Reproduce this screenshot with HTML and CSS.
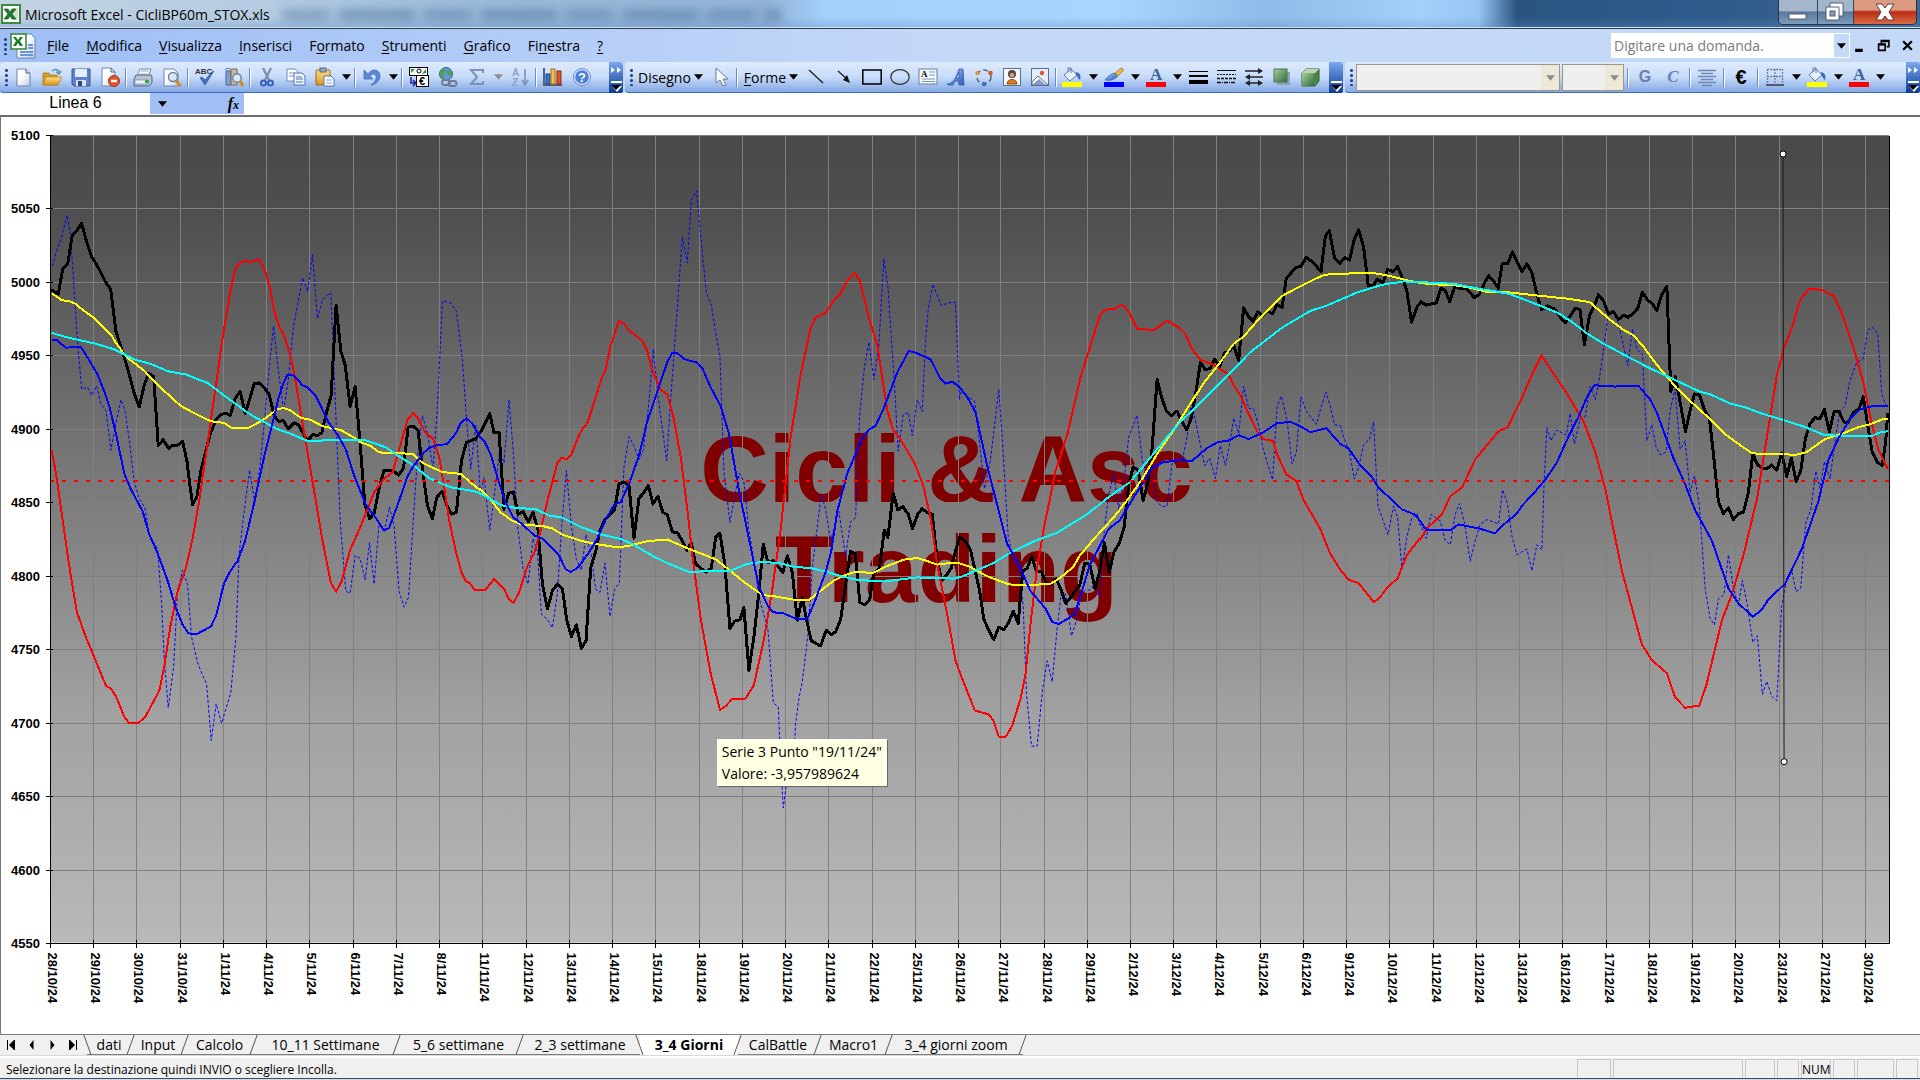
FILE: index.html
```
<!DOCTYPE html>
<html lang="it">
<head>
<meta charset="utf-8">
<title>Microsoft Excel - CicliBP60m_STOX.xls</title>
<link rel="stylesheet" href="styles.css">
</head>
<body>
<svg class="defs" width="0" height="0" aria-hidden="true">
  <defs>
    <linearGradient id="gBlue" x1="0" y1="0" x2="1" y2="1"><stop offset="0" stop-color="#a9c8f5"/><stop offset="1" stop-color="#2a5bb8"/></linearGradient>
    <linearGradient id="gGreen" x1="0" y1="0" x2="1" y2="1"><stop offset="0" stop-color="#a8cf9c"/><stop offset="1" stop-color="#2f6b36"/></linearGradient>
    <linearGradient id="gPage" x1="0" y1="0" x2="1" y2="1"><stop offset=".4" stop-color="#fff"/><stop offset="1" stop-color="#bccde8"/></linearGradient>
    <linearGradient id="gGold" x1="0" y1="0" x2="0" y2="1"><stop offset="0" stop-color="#ffe08a"/><stop offset="1" stop-color="#d8951c"/></linearGradient>
  </defs>
  <symbol id="i-excel" viewBox="0 0 20 20"><rect x="1" y="1" width="18" height="18" fill="#fff" stroke="#3b8a3b" stroke-width="2"/><rect x="12" y="4" width="5" height="12" fill="#cfe3cf"/><path d="M3 5h4l2 3 2-3h4l-4 5 4 5h-4l-2-3-2 3H3l4-5z" fill="#1f7a2c" stroke="#0f4d18" stroke-width=".6"/></symbol>
  <symbol id="i-book" viewBox="0 0 26 26"><path d="M7 1h14l4 4v20H7z" fill="url(#gPage)" stroke="#6b86ad"/><path d="M18 12h5M18 15h5M10 19h13M10 22h13" stroke="#6c94d4" stroke-width="2"/><rect x="1" y="1" width="15" height="15" fill="#fff" stroke="#3b8a3b" stroke-width="1.6"/><path d="M3 4h3l2 3 2-3h3l-3 4 3 5h-3l-2-3-2 3H3l3-5z" fill="#1f7a2c"/></symbol>
  <symbol id="i-new" viewBox="0 0 20 20"><path d="M4 2h9l4 4v13H4z" fill="url(#gPage)" stroke="#6d85ab"/><path d="M13 2v4h4" fill="#d7e2f3" stroke="#46597a"/></symbol>
  <symbol id="i-open" viewBox="0 0 20 20"><path d="M1 6h6l1 2h7v10H1z" fill="#d99c2b" stroke="#a87416" stroke-width=".7"/><path d="M4 10h16l-4 8H1z" fill="url(#gGold)" stroke="#b57e1c" stroke-width=".7"/><path d="M10 4c3-3 7-1 7 2m-3-1 3 2 2-3" fill="none" stroke="#5f8cba" stroke-width="1.5"/></symbol>
  <symbol id="i-save" viewBox="0 0 20 20"><path d="M1 2h18v17H3l-2-2z" fill="#5c82cb" stroke="#39549a"/><rect x="4" y="2" width="12" height="8" fill="#e3ecfa"/><rect x="5" y="13" width="10" height="6" fill="#dbe2ee"/><rect x="7" y="14" width="4" height="5" fill="#31498a"/></symbol>
  <symbol id="i-perm" viewBox="0 0 20 20"><path d="M2 1h9l4 4v14H2z" fill="url(#gPage)" stroke="#6d85ab"/><path d="M11 1v4h4" fill="none" stroke="#46597a"/><circle cx="14" cy="14" r="5.5" fill="#e2562c" stroke="#a83212"/><path d="M11 14h6" stroke="#fff" stroke-width="2.4"/></symbol>
  <symbol id="i-print" viewBox="0 0 20 20"><path d="M7 2h11l-3 8H4z" fill="#fff" stroke="#7184a4"/><path d="M8 4h7M7 7h7" stroke="#91a5c6"/><path d="M3 8h15l1 2v6l-3 3H1v-7z" fill="#b7c2d4" stroke="#556480"/><path d="M2 13h13v4H2z" fill="#eef2f8" stroke="#7d8aa4" stroke-width=".7"/><rect x="12" y="13" width="4" height="3" fill="#26b13f"/></symbol>
  <symbol id="i-preview" viewBox="0 0 20 20"><path d="M2 2h10l4 4v13H2z" fill="url(#gPage)" stroke="#6d85ab"/><circle cx="11" cy="10" r="4.5" fill="#d3e6f8" fill-opacity=".9" stroke="#6f83a0" stroke-width="1.5"/><path d="m14 14 5 5" stroke="#d58a1d" stroke-width="3"/></symbol>
  <symbol id="i-spell" viewBox="0 0 20 20"><path d="m5 11 5 7L19 4l-2 1-7 8-3-3z" fill="#3f6fc4" stroke="#2a4f9a" stroke-width=".6"/></symbol>
  <symbol id="i-research" viewBox="0 0 20 20"><path d="M2 4h5v14H2z" fill="#7e9fd6" stroke="#46639f"/><path d="M7 2h6v16H7z" fill="#c9b8a0" stroke="#7c6a50"/><path d="M1 3c2-2 3-2 5-1" stroke="#2f5fb5" fill="none"/><circle cx="13" cy="11" r="4.2" fill="#dbeaf9" stroke="#6f83a0" stroke-width="1.4"/><path d="m16 14 3 5" stroke="#d58a1d" stroke-width="3"/></symbol>
  <symbol id="i-cut" viewBox="0 0 20 20"><path d="m6 1 6 12M14 1 8 13" stroke="#7d8da8" stroke-width="2.2"/><circle cx="6.500" cy="16" r="2.500" fill="none" stroke="#3561b7" stroke-width="2"/><circle cx="13.500" cy="16" r="2.500" fill="none" stroke="#3561b7" stroke-width="2"/></symbol>
  <symbol id="i-copy" viewBox="0 0 20 20"><path d="M1 2h8l3 3v9H1z" fill="#fff" stroke="#6c8cc4"/><path d="M3 6h6M3 9h6" stroke="#6c8cc4"/><path d="M8 6h8l3 3v9H8z" fill="#eef4fd" stroke="#5377b8"/><path d="M10 10h6M10 12h7M10 15h7" stroke="#5377b8"/></symbol>
  <symbol id="i-paste" viewBox="0 0 20 20"><rect x="1" y="3" width="14" height="15" rx="1" fill="url(#gGold)" stroke="#9a6a14"/><rect x="5" y="1" width="6" height="4" fill="#9aa7bd" stroke="#56637c"/><path d="M9 9h7l3 3v7H9z" fill="#fff" stroke="#5377b8"/><path d="M11 13h6M11 16h6" stroke="#7d9bd0"/></symbol>
  <symbol id="i-undo" viewBox="0 0 20 20"><path d="M2 3v9h9L8 9c4-4 7-1 6 3-1 3-3 5-5 6 6-1 9-5 9-9 0-6-7-9-12-2z" fill="#5d88d2" stroke="#3a63b2" stroke-width=".7"/></symbol>
  <symbol id="i-euroconv" viewBox="0 0 20 20"><rect x=".5" y=".5" width="18" height="8" fill="#fff" stroke="#000"/><path d="M2 2h4L2 6zM17 2v4l-4 1z" fill="#18a034"/><circle cx="10" cy="4" r="2" fill="none" stroke="#000"/><rect x="7.500" y="8.500" width="12" height="11" fill="#fff" stroke="#000"/><path d="M2 10v6h4m-2-3 3 3-3 3" fill="none" stroke="#1c1c9c" stroke-width="1.500"/></symbol>
  <symbol id="i-link" viewBox="0 0 20 20"><circle cx="8" cy="7" r="6.500" fill="#5d9bdc" stroke="#2f6496"/><path d="M4 2c4-2 4 2 2 4s2 3 0 6C2 10 1 6 4 2zM9 3c4 0 6 3 4 6-3 0-5-3-4-6z" fill="#4ea04e"/><g fill="none" stroke="#6b7c92" stroke-width="1.800"><rect x="4" y="13" width="8" height="5" rx="2.500"/><rect x="10.500" y="14" width="8" height="5" rx="2.500"/></g></symbol>
  <symbol id="i-sum" viewBox="0 0 20 20"><path d="M16 6V3H4l6 7-6 7h12v-3" fill="none" stroke="#7b92bd" stroke-width="2"/></symbol>
  <symbol id="i-sort" viewBox="0 0 20 20"><path d="M15 2v15m-3-4 3 5 3-5" stroke="#8298c1" stroke-width="1.800" fill="none"/></symbol>
  <symbol id="i-chart" viewBox="0 0 20 20"><path d="M1 1v17h18" fill="none" stroke="#54617a" stroke-width="2"/><rect x="3" y="7" width="4" height="10" fill="#3d74d0" stroke="#1e438b"/><rect x="8" y="2" width="4" height="15" fill="#f5c046" stroke="#a3721a"/><rect x="14" y="4" width="4" height="13" fill="#e0522a" stroke="#8e2c10"/></symbol>
  <symbol id="i-help" viewBox="0 0 20 20"><circle cx="10" cy="10" r="8.500" fill="#dce9fb" stroke="#5f8cd4"/><circle cx="10" cy="10" r="6.800" fill="#4a7fd8"/></symbol>
  <symbol id="i-pointer" viewBox="0 0 20 20"><path d="M5 1v15l4-3 3 6 3-1-3-6h5z" fill="#f4f8fe" stroke="#6b7b98"/></symbol>
  <symbol id="i-line" viewBox="0 0 20 20"><path d="m3 3 14 13" stroke="#222" stroke-width="1.400"/></symbol>
  <symbol id="i-arrow" viewBox="0 0 20 20"><path d="m4 4 9 8" stroke="#222" stroke-width="1.400"/><path d="m16 16-7-3 4-5z" fill="#111"/></symbol>
  <symbol id="i-rect" viewBox="0 0 20 20"><rect x=".8" y="3" width="18.400" height="14" fill="none" stroke="#000" stroke-width="1.500"/></symbol>
  <symbol id="i-oval" viewBox="0 0 20 20"><ellipse cx="10" cy="10" rx="9.200" ry="7.300" fill="none" stroke="#333" stroke-width="1.300"/></symbol>
  <symbol id="i-textbox" viewBox="0 0 20 20"><rect x="1" y="2" width="18" height="15" fill="#f5f8fd" stroke="#6b7f9f"/><path d="M11 5h6M11 8h6M4 12h13M4 14.500h13" stroke="#7d93b8"/></symbol>
  <symbol id="i-wordart" viewBox="0 0 20 20"><path d="M1 17c6 0 9-6 12-15h4l1 16h-5l-.5-4H9l-2 4H2zm9-6h3V5z" fill="url(#gBlue)" fill-rule="evenodd" stroke="#2d5ab0" stroke-width=".8"/></symbol>
  <symbol id="i-diagram" viewBox="0 0 20 20"><circle cx="10" cy="10" r="7" fill="none" stroke="#56657f" stroke-width="1.500" stroke-dasharray="5 3"/><circle cx="3.500" cy="6" r="2.300" fill="#cf9a3a"/><circle cx="16.500" cy="6" r="2.300" fill="#d2542c"/><circle cx="10" cy="17" r="2.300" fill="#3f6fc4"/></symbol>
  <symbol id="i-clip" viewBox="0 0 20 20"><rect x="1.500" y="1.500" width="17" height="17" fill="#f5f8fd" stroke="#5c7090"/><circle cx="10" cy="7" r="4" fill="#5a4636"/><circle cx="10" cy="8" r="2.200" fill="#c7a58a"/><path d="M5 17c0-6 10-6 10 0z" fill="#e07d1c" stroke="#8e4b0c"/></symbol>
  <symbol id="i-picture" viewBox="0 0 20 20"><rect x="1.500" y="1.500" width="17" height="17" fill="#e4edfa" stroke="#5c7090"/><circle cx="12" cy="6" r="2.200" fill="#e2582a"/><path d="m2 15 6-6 10 9H2z" fill="#fff" stroke="#54698c"/><path d="m2 18 7-6 7 6z" fill="#7f9bc9"/></symbol>
  <symbol id="i-fill" viewBox="0 0 20 20"><rect y="15" width="20" height="5" fill="#ff0"/><path d="m9 2 6 6-7 6-6-6z" fill="#e8f0fb" stroke="#5e7ba8"/><path d="M9 6V1H6v4" fill="none" stroke="#5e7ba8"/><path d="M14 5c5 1 5 5 4 8-2-1-2-3-4-5z" fill="#3d6cc0"/></symbol>
  <symbol id="i-brush" viewBox="0 0 20 20"><rect y="15" width="20" height="5" fill="#00f"/><path d="M1 13c3-4 6-6 10-7l3 3c-4 4-8 5-13 4z" fill="url(#gBlue)" stroke="#2d5ab0" stroke-width=".7"/><path d="m11 6 6-5c2 0 3 2 2 3l-5 5z" fill="#eeb743" stroke="#a3721a" stroke-width=".7"/></symbol>
  <symbol id="i-font" viewBox="0 0 20 20"><rect y="15" width="20" height="5" fill="#f00"/></symbol>
  <symbol id="i-weights" viewBox="0 0 20 20"><path d="M1 4.500h19" stroke="#000"/><path d="M1 9h19" stroke="#000" stroke-width="2"/><path d="M1 15h19" stroke="#000" stroke-width="4"/></symbol>
  <symbol id="i-dashes" viewBox="0 0 20 20"><g stroke="#111"><path d="M1 3.500h19"/><path d="M1 7.500h19" stroke-dasharray="2 1"/><path d="M1 11.500h19" stroke-dasharray="3 1" stroke-width="1.500"/><path d="M1 15.500h19" stroke-dasharray="4 1 1 1" stroke-width="1.500"/></g></symbol>
  <symbol id="i-arrows" viewBox="0 0 20 20"><path d="M1 4h14M5 10h14M4 16h12" stroke="#222" stroke-width="1.500"/><path d="m19 4-5-3v6zM1 10l5-3v6zM1 16l5-3v6zM19 16l-5-3v6z" fill="#222"/></symbol>
  <symbol id="i-shadow" viewBox="0 0 20 20"><rect x="5" y="5" width="13" height="13" fill="#8da3bd"/><rect x="2" y="2" width="13" height="13" fill="url(#gGreen)" stroke="#4a7a4c"/></symbol>
  <symbol id="i-cube" viewBox="0 0 20 20"><path d="m2 6 4-4h13v12l-4 5H2z" fill="#4c8450" stroke="#2d5c33"/><path d="m2 6 4-4h13l-4 4z" fill="#b9d9af"/><rect x="2" y="6" width="12" height="13" fill="url(#gGreen)"/></symbol>
  <symbol id="i-center" viewBox="0 0 20 20"><path d="M1 3.500h18M4 6.500h12M1 9.500h18M4 12.500h12M1 15.500h18M5 18.500h10" stroke="#6d87b8" stroke-width="1.300"/></symbol>
  <symbol id="i-border" viewBox="0 0 20 20"><path d="M2 2.500h16M2 9.500h16M2.500 2v16M10 2v16M17.500 2v16" stroke="#6f7f98" stroke-width="1.300" stroke-dasharray="2 1"/><path d="M1 18h18" stroke="#4c5a74" stroke-width="2"/></symbol>
  <symbol id="i-down" viewBox="0 0 10 6"><path d="M0 0h10L5 6z" fill="currentColor"/></symbol>
</svg>

<header class="titlebar">
  <svg class="app-icon"><use href="#i-excel"/></svg>
  <h1 class="title">Microsoft Excel - CicliBP60m_STOX.xls</h1>
  <span class="ghost" aria-hidden="true"></span>
  <div class="window-buttons">
    <button class="wb wb-min" aria-label="Riduci a icona"><svg viewBox="0 0 40 24"><rect x="11" y="14" width="17" height="5" fill="#fff" stroke="#555d6b"/></svg></button>
    <button class="wb wb-max" aria-label="Ripristina"><svg viewBox="0 0 36 24"><path d="M12 3h13v13h-4v4H8V7h4z" fill="#fff" stroke="#555d6b"/><rect x="12" y="11" width="5" height="5" fill="#8b9db5" stroke="#555d6b"/><path d="M12 7h9v9" fill="none" stroke="#555d6b"/></svg></button>
    <button class="wb wb-close" aria-label="Chiudi"><svg viewBox="0 0 62 24"><path d="M22 4h6l3 4 3-4h6l-5 8 5 8h-6l-3-4-3 4h-6l5-8z" fill="#fff" stroke="#5a3a3c"/></svg></button>
  </div>
</header>

<nav class="menubar">
  <span class="grip"></span>
  <svg class="book-icon"><use href="#i-book"/></svg>
  <button class="menu"><u>F</u>ile</button>
  <button class="menu"><u>M</u>odifica</button>
  <button class="menu"><u>V</u>isualizza</button>
  <button class="menu"><u>I</u>nserisci</button>
  <button class="menu">F<u>o</u>rmato</button>
  <button class="menu"><u>S</u>trumenti</button>
  <button class="menu"><u>G</u>rafico</button>
  <button class="menu">Fi<u>n</u>estra</button>
  <button class="menu"><u>?</u></button>
  <div class="ask">
    <input type="text" aria-label="Domanda" placeholder="Digitare una domanda.">
    <button aria-label="Domande recenti"><svg class="down"><use href="#i-down"/></svg></button>
  </div>
  <div class="doc-buttons">
    <button aria-label="Riduci finestra"><svg viewBox="0 0 12 12"><path d="M2 10.500h7" stroke="#000" stroke-width="3"/></svg></button>
    <button aria-label="Ripristina finestra"><svg viewBox="0 0 12 12"><path d="M4 4V1.500h7V7H9M1.500 5h6v5.500h-6z" fill="none" stroke="#000" stroke-width="1.500"/><path d="M4 2h7M1 5h7" stroke="#000" stroke-width="2"/></svg></button>
    <button aria-label="Chiudi finestra"><svg viewBox="0 0 12 12"><path d="m2 2 8 8m0-8-8 8" stroke="#000" stroke-width="2"/></svg></button>
  </div>
</nav>

<div class="toolbars">
  <div class="toolbar wide" role="toolbar" aria-label="Standard">
    <span class="grip"></span>
    <button class="tb" aria-label="Nuovo"><svg><use href="#i-new"/></svg></button>
    <button class="tb" aria-label="Apri"><svg><use href="#i-open"/></svg></button>
    <button class="tb" aria-label="Salva"><svg><use href="#i-save"/></svg></button>
    <button class="tb" aria-label="Autorizzazione"><svg><use href="#i-perm"/></svg></button>
    <span class="sep"></span>
    <button class="tb" aria-label="Stampa"><svg><use href="#i-print"/></svg></button>
    <button class="tb" aria-label="Anteprima"><svg><use href="#i-preview"/></svg></button>
    <span class="sep"></span>
    <button class="tb" aria-label="Controllo ortografia"><svg><use href="#i-spell"/><text x="0" y="7" class="t-abc">ABC</text></svg></button>
    <button class="tb" aria-label="Ricerche"><svg><use href="#i-research"/></svg></button>
    <span class="sep"></span>
    <button class="tb" aria-label="Taglia"><svg><use href="#i-cut"/></svg></button>
    <button class="tb" aria-label="Copia"><svg><use href="#i-copy"/></svg></button>
    <button class="tb" aria-label="Incolla"><svg><use href="#i-paste"/></svg></button>
    <button class="drop" aria-label="Opzioni Incolla"><svg class="down"><use href="#i-down"/></svg></button>
    <span class="sep"></span>
    <button class="tb" aria-label="Annulla"><svg><use href="#i-undo"/></svg></button>
    <button class="drop" aria-label="Elenco annulla"><svg class="down"><use href="#i-down"/></svg></button>
    <span class="sep"></span>
    <button class="tb" aria-label="Conversione euro"><svg><use href="#i-euroconv"/><text x="10" y="18" class="t-euro">€</text></svg></button>
    <button class="tb" aria-label="Collegamento"><svg><use href="#i-link"/></svg></button>
    <button class="tb" aria-label="Somma" disabled><svg><use href="#i-sum"/></svg></button>
    <button class="drop" aria-label="Funzioni" disabled><svg class="down"><use href="#i-down"/></svg></button>
    <button class="tb" aria-label="Ordina" disabled><svg><use href="#i-sort"/><text x="2" y="9" class="t-sort">A</text><text x="2" y="19" class="t-sort">Z</text></svg></button>
    <span class="sep"></span>
    <button class="tb" aria-label="Grafico"><svg><use href="#i-chart"/></svg></button>
    <button class="tb" aria-label="Guida"><svg><use href="#i-help"/><text x="6" y="15" class="t-help">?</text></svg></button>
    <button class="more" aria-label="Opzioni barra"><svg viewBox="0 0 14 31"><path d="m2 5 4 3-4 3zM8 5l4 3-4 3zM2 19h11v2H2zM3 24h10l-5 6z" fill="#fff"/><path d="M2 23h10l-5 5z" fill="#000"/></svg></button>
  </div>
  <div class="toolbar" role="toolbar" aria-label="Disegno">
    <span class="grip"></span>
    <button class="word"><span>Dise<u>g</u>no</span><svg class="down"><use href="#i-down"/></svg></button>
    <button class="tb" aria-label="Seleziona"><svg><use href="#i-pointer"/></svg></button>
    <span class="sep"></span>
    <button class="word"><span><u>F</u>orme</span><svg class="down"><use href="#i-down"/></svg></button>
    <button class="tb" aria-label="Linea"><svg><use href="#i-line"/></svg></button>
    <button class="tb" aria-label="Freccia"><svg><use href="#i-arrow"/></svg></button>
    <button class="tb" aria-label="Rettangolo"><svg><use href="#i-rect"/></svg></button>
    <button class="tb" aria-label="Ovale"><svg><use href="#i-oval"/></svg></button>
    <button class="tb" aria-label="Casella di testo"><svg><use href="#i-textbox"/><text x="3" y="10" class="t-box">A</text></svg></button>
    <button class="tb" aria-label="WordArt"><svg><use href="#i-wordart"/></svg></button>
    <button class="tb" aria-label="Diagramma"><svg><use href="#i-diagram"/></svg></button>
    <button class="tb" aria-label="ClipArt"><svg><use href="#i-clip"/></svg></button>
    <button class="tb" aria-label="Immagine"><svg><use href="#i-picture"/></svg></button>
    <span class="sep"></span>
    <button class="tb" aria-label="Riempimento"><svg><use href="#i-fill"/></svg></button>
    <button class="drop" aria-label="Colori riempimento"><svg class="down"><use href="#i-down"/></svg></button>
    <button class="tb" aria-label="Colore linea"><svg><use href="#i-brush"/></svg></button>
    <button class="drop" aria-label="Colori linea"><svg class="down"><use href="#i-down"/></svg></button>
    <button class="tb" aria-label="Colore carattere"><svg><use href="#i-font"/><text x="4" y="13" class="t-font">A</text></svg></button>
    <button class="drop" aria-label="Colori carattere"><svg class="down"><use href="#i-down"/></svg></button>
    <button class="tb" aria-label="Stile linea"><svg><use href="#i-weights"/></svg></button>
    <button class="tb" aria-label="Stile tratteggio"><svg><use href="#i-dashes"/></svg></button>
    <button class="tb" aria-label="Stile freccia"><svg><use href="#i-arrows"/></svg></button>
    <button class="tb" aria-label="Ombreggiatura"><svg><use href="#i-shadow"/></svg></button>
    <button class="tb" aria-label="Stile 3D"><svg><use href="#i-cube"/></svg></button>
    <button class="more" aria-label="Opzioni barra"><svg viewBox="0 0 14 31"><path d="M2 19h11v2H2zM3 24h10l-5 6z" fill="#fff"/><path d="M2 23h10l-5 5z" fill="#000"/></svg></button>
  </div>
  <div class="toolbar format" role="toolbar" aria-label="Formattazione">
    <span class="grip"></span>
    <span class="combo combo-font"><select aria-label="Tipo di carattere" disabled><option></option></select><svg class="down"><use href="#i-down"/></svg></span>
    <span class="combo combo-size"><select aria-label="Dimensione" disabled><option></option></select><svg class="down"><use href="#i-down"/></svg></span>
    <span class="sep"></span>
    <button class="tb glyph bold" disabled>G</button>
    <button class="tb glyph italic" disabled>C</button>
    <span class="sep"></span>
    <button class="tb" aria-label="Allinea al centro" disabled><svg><use href="#i-center"/></svg></button>
    <span class="sep"></span>
    <button class="tb glyph euro">€</button>
    <span class="sep"></span>
    <button class="tb" aria-label="Bordi"><svg><use href="#i-border"/></svg></button>
    <button class="drop" aria-label="Stili bordo"><svg class="down"><use href="#i-down"/></svg></button>
    <button class="tb" aria-label="Colore riempimento"><svg><use href="#i-fill"/></svg></button>
    <button class="drop" aria-label="Tavolozza riempimento"><svg class="down"><use href="#i-down"/></svg></button>
    <button class="tb" aria-label="Colore testo"><svg><use href="#i-font"/><text x="4" y="13" class="t-font">A</text></svg></button>
    <button class="drop" aria-label="Tavolozza testo"><svg class="down"><use href="#i-down"/></svg></button>
    <button class="more" aria-label="Opzioni barra"><svg viewBox="0 0 14 31"><path d="m2 5 4 3-4 3zM8 5l4 3-4 3zM2 19h11v2H2zM3 24h10l-5 6z" fill="#fff"/><path d="M2 23h10l-5 5z" fill="#000"/></svg></button>
  </div>
</div>

<div class="formula-row">
  <input class="name-box" type="text" aria-label="Casella nome" value="Linea 6">
  <button class="name-drop" aria-label="Elenco nomi"><svg class="down"><use href="#i-down"/></svg></button>
  <button class="fx" aria-label="Inserisci funzione"><i>f</i><i class="fx-x">x</i></button>
  <input class="formula" type="text" aria-label="Barra della formula">
</div>

<main class="sheet">
  <svg id="chart" class="chart" viewBox="0 117 1920 917" role="img" aria-label="Cicli &amp; Asc Trading">
    <defs>
      <linearGradient id="plotFill" x1="0" y1="0" x2="0" y2="1">
        <stop offset="0" stop-color="#494949"/><stop offset=".08" stop-color="#4d4d4d"/><stop offset=".45" stop-color="#7c7c7c"/><stop offset=".72" stop-color="#a2a2a2"/><stop offset="1" stop-color="#b9b9b9"/>
      </linearGradient>
    </defs>
    <rect x="49" y="136" width="1840" height="807" fill="url(#plotFill)"/>
    <text class="watermark" x="946" y="502">Cicli &amp; Asc</text>
    <text class="watermark" x="946" y="602">Trading</text>
    <g id="grid" class="grid"></g>
    <g id="series" class="series"></g>
    <path class="threshold" d="M49 481H1889"/>
    <path class="frame" d="M49.500 136V943.500H1889.500V136"/>
    <g id="ticks" class="ticks"></g>
    <g id="ylabels" class="ylabels"></g>
    <g id="xlabels" class="xlabels"></g>
    <g class="marker"><path d="M1783 154L1784 762"/><circle cx="1783" cy="154" r="3"/><circle cx="1784" cy="762" r="3"/></g>
  </svg>
  <div class="tooltip" role="tooltip">Serie 3 Punto "19/11/24"<br>Valore: -3,957989624</div>
</main>

<div class="tabstrip">
  <div class="tab-nav">
    <button aria-label="Primo foglio"><svg viewBox="0 0 8 10"><path d="M1 0v10M8 0 3 5l5 5z" stroke="#000"/></svg></button>
    <button aria-label="Foglio precedente"><svg viewBox="0 0 8 10"><path d="M6 0 2 5l4 5z"/></svg></button>
    <button aria-label="Foglio successivo"><svg viewBox="0 0 8 10"><path d="m2 0 4 5-4 5z"/></svg></button>
    <button aria-label="Ultimo foglio"><svg viewBox="0 0 8 10"><path d="M7 0v10M0 0l5 5-5 5z" stroke="#000"/></svg></button>
  </div>
  <div class="tabs" role="tablist">
    <button role="tab" class="tab first">dati</button>
    <button role="tab" class="tab">Input</button>
    <button role="tab" class="tab">Calcolo</button>
    <button role="tab" class="tab">10_11 Settimane</button>
    <button role="tab" class="tab">5_6 settimane</button>
    <button role="tab" class="tab before">2_3 settimane</button>
    <button role="tab" class="tab active" aria-selected="true">3_4 Giorni</button>
    <button role="tab" class="tab">CalBattle</button>
    <button role="tab" class="tab">Macro1</button>
    <button role="tab" class="tab">3_4 giorni zoom</button>
  </div>
</div>

<footer class="statusbar">
  <span class="status-text">Selezionare la destinazione quindi INVIO o scegliere Incolla.</span>
  <span class="cell"></span><span class="cell"></span><span class="cell"></span><span class="cell"></span>
  <span class="cell">NUM</span><span class="cell"></span><span class="cell"></span><span class="cell"></span>
</footer>
<div class="desktop-edge"></div>
<script src="chart.js"></script>
</body>
</html>
```
FILE: styles.css
```
* { box-sizing: border-box; }
body {
  margin: 0;
  min-height: 100vh;
  display: flex;
  flex-direction: column;
  background: #fff;
  color: #000;
  font: 14px "Open Sans", "Noto Sans", sans-serif;
  overflow-x: hidden;
}
button, input, select { font: inherit; color: inherit; border: 0; padding: 0; margin: 0; background: none; }
button { display: flex; align-items: center; justify-content: center; flex: none; }
svg { display: block; flex: none; }
.defs { position: absolute; }
u { text-underline-offset: 2px; }
.down { width: 9px; height: 6px; }

.titlebar {
  display: flex;
  align-items: flex-start;
  height: 29px;
  padding-left: 1px;
  border-bottom: 1px solid #333c49;
  box-shadow: inset 0 -1px #cfe0f0;
  background:
    linear-gradient(180deg, #ffffff00 60%, #5a8fc855),
    linear-gradient(90deg, #c2d3e2 0, #b4cbe2 14%, #9dbbda 24%, #92b4d8 40%, #a3d0fb 43%, #a8d4ff 58%, #8fbbe8 66%, #a3cffa 74%, #97c6f3 77%, #2b5480 79%, #2c5a8a 88%, #40668d 100%);
}
.app-icon { width: 20px; height: 20px; margin-top: 4px; }
.title { margin: 0 0 0 4px; font-size: 14px; font-weight: 400; line-height: 29px; white-space: nowrap; }
.ghost {
  width: 500px; height: 12px; margin: 9px 0 0 12px;
  background: repeating-linear-gradient(90deg, #4a6f9a66 0 44px, #4a6f9a22 48px 56px, #4a6f9a77 60px 130px, #4a6f9a22 134px 142px);
  filter: blur(4px);
}
.window-buttons { display: flex; margin-left: auto; margin-right: 3px; border: 1px solid #20364f; border-top: 0; border-radius: 0 0 5px 5px; overflow: hidden; }
.wb { height: 24px; border-right: 1px solid #2d435e; background: linear-gradient(#a3b6cc 45%, #58779a 50%, #7f9cbc); }
.wb svg { height: 24px; }
.wb-min { width: 39px; }
.wb-max { width: 36px; }
.wb-close { width: 62px; border: 0; background: linear-gradient(#dd9a83 40%, #b92d14 50%, #d96a44); }

.menubar {
  display: flex;
  align-items: center;
  height: 33px;
  padding: 0 6px 0 4px;
  background: linear-gradient(90deg, #9ebef5, #c4d8f8 50%);
}
.grip { flex: none; width: 3px; height: 18px; background: radial-gradient(circle, #27418c 1px, transparent 2px) 0 0 / 3px 5px; }
.book-icon { width: 26px; height: 26px; margin: 0 1px 0 3px; }
.menu { margin-left: 10px; padding-right: 7px; line-height: 22px; }
.ask { display: flex; width: 239px; height: 25px; margin-left: auto; background: #fff; }
.ask input { flex: 1; min-width: 0; padding: 0 3px; }
.ask input::placeholder { color: #7b7b7b; opacity: 1; }
.ask button { width: 16px; background: #c4d8f8; border: 1px solid #fff; border-left: 0; }
.doc-buttons { display: flex; gap: 11px; margin-left: 3px; }
.doc-buttons svg { width: 13px; height: 13px; }

.toolbars { display: grid; grid-template-columns: 625fr 720fr 575fr; background: #c0d5f8; }
.toolbar {
  display: flex;
  align-items: center;
  height: 31px;
  min-width: 0;
  margin-right: 2px;
  padding-left: 5px;
  border-bottom: 1px solid #3c69b8;
  border-radius: 4px 3px 3px 4px;
  background: linear-gradient(#dfebfd, #c7dbf9 50%, #84a9e4);
}
.toolbar:last-child { margin-right: 0; }
.tb { width: 28px; height: 28px; }
.wide .tb { width: 29px; }
.tb svg { width: 20px; height: 20px; overflow: visible; }
.drop { width: 14px; height: 28px; }
.drop:disabled { color: #8d8d8d; }
.sep { flex: none; width: 2px; height: 19px; margin: 0 1px; background: linear-gradient(90deg, #6a8ccb 50%, #fff 50%); }
.format .sep { margin: 0 2px; }
.word { padding: 0 4px 0 5px; gap: 3px; }
.more { align-self: stretch; width: 14px; height: 31px; margin-left: auto; border-radius: 0 3px 3px 0; background: linear-gradient(#7ba7ec, #0a3a96); }
.more svg { width: 14px; height: 31px; }
.combo { position: relative; flex: none; height: 27px; margin-right: 2px; border: 1px solid #9b9784; background: #efefef; }
.combo select { appearance: none; width: 100%; height: 100%; opacity: 1; background: linear-gradient(#ece9d8, #ece9d8) right / 18px 100% no-repeat; }
.combo .down { position: absolute; right: 4px; top: 10px; color: #8d8d8d; }
.combo-font { width: 204px; margin-left: 3px; }
.combo-size { width: 62px; margin-right: 1px; }
.glyph { font: 700 16px "Liberation Sans", sans-serif; color: #6480b4; }
.italic { font: italic 700 17px "Liberation Serif", serif; }
.euro { color: #000; font-size: 20px; }

.formula-row { display: flex; height: 21px; background: #fff; }
.name-box { width: 149px; margin: 0 0 1px 1px; background: #fff; text-align: center; font: 16px/20px "Liberation Sans", sans-serif; }
.name-drop { width: 24px; background: #a1bff6; }
.fx { width: 70px; justify-content: flex-end; padding-right: 5px; align-items: baseline; background: #a1bff6; font: 700 16px/22px "Liberation Serif", serif; }
.fx-x { font-size: 12px; }
.formula { flex: 1; min-width: 0; }

.sheet { position: relative; flex: 1; border-top: 2px solid #6d6d6d; border-left: 1px solid #777; background: #fff; margin-top: 1px; }
.chart { width: 100%; height: auto; }
.watermark { font: 700 95px "Liberation Sans", sans-serif; fill: #800000; text-anchor: middle; }
.grid path { stroke: #808080; fill: none; shape-rendering: crispEdges; }
.frame, .ticks path { stroke: #000; fill: none; shape-rendering: crispEdges; }
.series path { fill: none; stroke-width: 2; stroke-linejoin: round; shape-rendering: crispEdges; }
.series .price { stroke: #000; stroke-width: 3; }
.series .fast { stroke: #00f; stroke-width: 1; stroke-dasharray: 3 2; }
.series .mid { stroke: #00f; }
.series .slow { stroke: #f00; }
.series .avg { stroke: #ff0; }
.series .trend { stroke: #0ff; }
.threshold { stroke: #f00; stroke-width: 2; stroke-dasharray: 4 8; fill: none; shape-rendering: crispEdges; }
.ylabels { font: 700 13px "Liberation Sans", sans-serif; text-anchor: end; }
.xlabels { font: 700 13px "Liberation Sans", sans-serif; }
.marker path { stroke: #1c1c1c; }
.marker circle { fill: #fff; stroke: #000; }
.tooltip {
  position: absolute;
  left: 37.3%;
  top: 622px;
  padding: 1px 5px 1px 4px;
  border: 1px solid #fff;
  border-right-color: #666;
  border-bottom-color: #666;
  background: #ffffe1;
  font-size: 14px;
  line-height: 22px;
  white-space: nowrap;
}
.t-abc { font: 700 8px "Liberation Sans", sans-serif; fill: #333; }
.t-euro { font: 700 11px "Liberation Sans", sans-serif; }
.t-sort { font: 700 10px "Liberation Sans", sans-serif; fill: #8ea3c8; }
.t-help { font: 700 13px "Liberation Sans", sans-serif; fill: #fff; }
.t-box { font: 700 9px "Liberation Serif", serif; }
.t-font { font: 700 17px "Liberation Serif", serif; fill: #3d5f9c; }

.tabstrip { display: flex; height: 22px; border-top: 1px solid #7d7d7d; border-bottom: 1px solid #d8d8d8; background: #f0f0f0; }
.tab-nav { display: flex; align-items: center; gap: 12px; width: 87px; padding-left: 6px; }
.tab-nav svg { width: 9px; height: 10px; }
.tabs { display: grid; grid-template-columns: 44px 54px 69px 143px 123px 120px 98px 80px 71px 134px; }
.tab { position: relative; width: 100%; height: 20px; font-size: 14px; line-height: 19px; white-space: nowrap; border-bottom: 1px solid #7d7d7d; }
.tab::after, .first::before { content: ""; position: absolute; top: 0; right: 0; width: 1px; height: 20px; background: #555; transform: skewX(-20deg); }
.first::before { left: 0; right: auto; transform: skewX(20deg); }
.before::after { transform: skewX(20deg); }
.active { font-weight: 700; background: #fff; border-bottom-color: #fff; clip-path: polygon(-4px 0, 102px 0, 95px 100%, 4px 100%); }

.statusbar { display: flex; gap: 2px; align-items: flex-end; height: 22px; padding: 0 2px 0 6px; border-top: 2px solid #fff; background: #f0f0f0; font-size: 12px; line-height: 16px; }
.status-text { margin-right: auto; }
.cell { height: 19px; padding-top: 2px; border: 1px solid #c8c8c8; border-bottom: 0; text-align: center; width: 30px; }
.cell:nth-child(2) { width: 34px; }
.cell:nth-child(3) { width: 130px; }
.cell:nth-child(5), .cell:nth-child(7), .cell:nth-child(9) { width: 22px; }
.cell:nth-child(8) { width: 37px; }
.desktop-edge { height: 2px; border-top: 1px solid #3f4c60; background: #c9dcf2; }
```
FILE: chart.js
```
// Each session block stores its points on a local scale: origin x, origin y, vertical step.
const blocks = [
  { x: 0, y: 120, step: 0.42092 },
  { x: 480, y: 160, step: 0.42092 },
  { x: 960, y: 200, step: 0.38265 },
  { x: 1420, y: 120, step: 0.43367 }
];

const series = {
  fast: [
    "154,347 168,307 180,285 198,226 207,265 215,350 228,510 242,640 260,635 272,655 287,632 300,676 315,690 330,785 345,720 360,665 372,690 385,760 400,860 415,900 432,922 445,985 470,1020 482,1150 490,1280 502,1397 518,1300 530,1120 545,1070 560,1105 572,1230 590,1290 605,1320 617,1340 631,1475 646,1388 662,1434 690,1360 705,1230 715,1030 730,930 746,832 762,910 778,820 795,680 805,590 818,490 830,580 848,690 862,620 878,490 905,375 920,408 935,320 950,472 965,427 990,410 1000,600 1018,950 1035,1120 1048,1125 1063,1035 1078,1042 1093,1093 1106,1005 1120,1103 1135,960 1150,980 1166,920 1180,965 1195,1120 1210,1158 1223,1135 1237,960 1250,800 1265,703 1280,745 1297,830 1310,680 1325,430 1350,435 1367,455 1385,570 1397,710 1410,830 1425,725 1438,875",
    "0,790 10,755 27,880 45,770 57,690 70,720 85,570 98,700 112,880 127,970 142,1008 157,900 170,930 182,1080 200,1092 215,1112 230,1030 243,870 257,738 272,870 287,950 302,975 316,890 332,940 345,1020 358,1028 373,958 388,1085 402,1020 416,1005 430,730 445,658 460,680 475,712 488,690 503,590 518,450 532,560 558,715 570,570 582,440 605,183 620,245 632,95 648,73 660,180 677,315 692,345 705,410 718,465 730,740 748,862 762,800 776,745 790,765 805,880 820,950 835,1040 862,1115 878,1290 893,1300 897,1370 905,1500 908,1540 918,1480 935,1490 945,1340 955,1280 965,1240 982,1130 995,970 1022,795 1035,830 1050,905 1075,835 1095,942 1110,860 1125,850 1138,600 1152,490 1165,433 1180,522 1195,440 1210,235 1222,300 1240,510 1253,692 1268,605 1283,600 1295,655 1310,570 1325,598 1335,430 1343,355 1357,295 1383,347 1400,340 1425,338 1437,570",
    "0,500 20,514 42,525 58,640 72,755 90,680 115,495 128,660 143,880 158,940 175,960 188,1060 198,1290 213,1428 230,1428 245,1290 260,1205 275,1260 290,1120 302,1030 316,1030 333,1140 348,1100 362,1030 375,1020 390,1020 402,1003 417,1040 432,860 445,770 460,715 475,810 490,740 505,620 530,563 545,680 560,720 575,720 590,790 605,802 620,800 635,690 650,680 665,683 680,620 693,525 708,590 733,695 748,675 765,728 780,642 795,695 808,640 820,570 835,610 850,487 865,545 880,545 895,590 908,650 922,690 937,732 950,540 963,513 980,575 995,690 1008,660 1022,515 1038,552 1068,587 1083,540 1097,502 1110,540 1123,588 1140,590 1152,625 1168,660 1182,730 1195,700 1210,640 1228,625 1240,580 1253,800 1283,875 1300,800 1312,830 1325,965 1340,880 1355,830 1370,820 1380,850",
    "5,940 18,965 32,910 60,925 75,970 90,980 105,910 118,885 133,930 150,1018 165,970 180,933 200,922 235,932 247,853 262,885 275,960 290,1003 320,990 335,1040 350,980 365,992 372,830 380,710 392,740 410,715 438,727 450,677 463,747 480,690 495,685 510,615 525,645 537,600 550,530 565,445 580,440 595,470 610,520 623,567 637,482 650,530 667,540 672,620 680,740 695,703 708,755 722,773 738,765 750,670 765,620 780,760 795,740 810,860 823,820 838,890 855,1080 870,1150 883,1165 895,1105 912,1095 925,1003 940,1080 955,1120 967,1062 982,1120 998,1205 1012,1190 1027,1325 1040,1295 1055,1330 1070,1340 1085,1120 1100,1060 1115,1040 1128,1088 1142,1080 1157,930 1172,900 1187,810 1200,850 1213,788 1230,828 1245,740 1260,672 1275,660 1290,600 1310,560 1330,550 1343,485 1357,478 1373,492 1385,630 1397,658"
  ],
  price: [
    "150,403 160,408 172,414 185,354 200,342 214,275 228,262 242,246 258,292 272,325 288,345 303,368 315,387 329,402 345,502 360,540 375,577 390,620 400,650 415,682 430,630 443,602 458,610 472,774 487,760 503,781 515,773 530,773 545,764 558,810 565,855 575,914 588,895 600,834 615,785 630,742 645,713 660,700 675,697 688,703 703,662 718,646 733,697 747,662 760,626 775,625 790,636 805,652 820,703 833,716 848,715 862,734 880,720 893,725 905,742 920,762 937,748 950,750 963,743 977,695 991,655 1006,440 1020,550 1033,582 1048,681 1063,634 1077,760 1092,913 1106,948 1120,935 1135,875 1150,832 1175,832 1193,844 1208,828 1222,730 1237,728 1252,738 1265,830 1280,917 1295,948 1308,897 1324,883 1338,915 1352,937 1367,932 1382,810 1397,766 1425,758 1438,742",
    "0,647 27,603 40,648 55,648 70,830 84,792 98,789 112,842 127,836 143,860 157,838 172,880 185,1008 200,1067 215,1024 230,1008 245,1019 258,1093 272,1133 287,1105 302,1161 316,1143 330,970 345,930 358,880 372,856 388,842 402,830 415,770 430,766 445,774 460,899 475,805 490,790 503,774 517,818 532,800 547,838 560,843 575,884 590,886 605,906 618,928 632,910 645,960 660,970 677,980 692,970 705,897 718,887 733,963 748,1114 762,1096 778,1093 790,1064 805,1213 820,1133 835,1027 848,913 862,957 878,952 892,966 907,980 920,941 935,980 950,1094 965,1040 978,1093 992,1143 1020,1155 1037,1118 1052,1128 1065,1122 1080,1093 1095,1010 1110,930 1124,936 1138,1052 1152,1057 1167,1045 1180,984 1197,970 1211,880 1222,898 1238,792 1252,832 1267,824 1283,842 1296,876 1312,842 1325,829 1340,838 1355,842 1370,950 1383,1000 1397,988 1412,970 1425,930 1438,896",
    "0,883 15,893 30,915 43,965 57,1020 70,1096 85,1125 100,1150 115,1117 130,1124 143,1107 158,1075 173,1107 187,970 200,963 214,932 228,970 243,972 258,1003 272,1005 287,990 302,1020 316,1055 330,1040 345,1022 358,1008 373,950 388,952 404,1017 418,970 432,896 446,975 460,922 477,897 491,855 505,745 518,698 533,706 548,785 562,742 575,650 590,470 605,520 618,552 633,564 650,552 665,580 679,601 693,570 707,500 720,425 735,444 750,440 763,416 778,436 792,400 805,397 820,380 835,420 850,282 865,305 878,317 892,293 907,302 922,291 937,298 950,274 965,281 978,205 993,190 1007,177 1022,173 1038,150 1053,160 1068,173 1082,187 1095,95 1107,80 1123,153 1138,166 1153,151 1168,157 1182,103 1195,78 1210,123 1224,224 1238,224 1252,207 1268,218 1282,182 1298,187 1312,174 1328,207 1340,240 1354,320 1370,280 1383,266",
    "5,421 18,427 48,422 62,388 75,393 88,419 103,386 118,388 140,390 163,410 178,402 192,377 205,359 220,371 234,388 246,332 262,332 277,304 290,326 305,350 320,332 335,352 350,402 364,438 382,429 405,437 420,455 435,468 450,452 465,435 479,437 493,518 508,452 522,430 535,403 550,417 565,448 580,442 595,460 610,450 623,455 638,447 653,434 667,397 683,417 695,422 710,440 724,405 740,384 752,626 766,592 782,660 796,719 810,670 823,632 838,634 853,668 868,688 880,770 895,880 910,908 925,895 940,922 955,908 970,905 985,860 998,770 1012,795 1027,804 1040,805 1055,796 1070,808 1085,768 1100,822 1114,780 1128,834 1142,810 1156,735 1170,700 1185,687 1200,689 1213,667 1228,719 1242,673 1257,673 1272,697 1285,697 1300,675 1317,667 1330,638 1343,705 1357,767 1372,790 1387,797 1397,740 1403,677"
  ],
  avg: [
    "152,412 182,428 205,431 225,437 240,448 280,471 330,510 345,530 375,562 430,596 480,637 540,680 590,701 630,716 670,720 690,731 745,731 785,714 830,687 848,685 868,690 900,708 930,713 965,728 1020,737 1060,755 1080,766 1110,775 1132,788 1150,792 1235,793 1265,815 1325,837 1380,841 1410,862 1438,880",
    "0,783 30,808 60,838 95,858 125,867 185,870 215,876 245,891 300,905 345,913 415,921 450,916 500,906 560,902 620,923 705,949 745,974 790,1003 845,1034 880,1037 940,1045 985,1046 1015,1027 1060,1000 1085,989 1120,980 1180,981 1220,965 1270,950 1310,946 1335,952 1370,962 1420,957 1438,959",
    "0,951 30,960 80,984 145,1005 200,1008 272,1003 302,986 338,960 358,930 405,882 460,830 500,785 545,730 590,664 640,602 690,532 735,473 775,430 820,376 850,357 890,317 965,251 1000,235 1045,215 1085,198 1115,193 1180,192 1240,191 1290,199 1350,212",
    "0,376 40,379 100,381 145,386 195,396 270,398 350,405 440,412 508,420 570,461 610,484 640,497 670,523 710,565 770,619 820,655 870,690 915,725 960,750 997,769 1050,771 1130,772 1160,766 1215,736 1270,723 1310,710 1350,702 1390,690 1403,689"
  ],
  trend: [
    "152,506 200,517 280,531 340,545 400,569 450,580 500,597 555,605 620,625 670,655 750,701 830,735 870,746 920,763 960,762 1090,760 1155,778 1190,797 1240,822 1285,851 1350,873 1420,882",
    "0,793 60,820 95,826 165,830 205,845 245,850 305,874 365,891 420,901 460,915 520,943 570,962 625,979 750,976 800,960 850,955 900,959 940,967 990,970 1040,979 1080,989 1130,998 1210,1002 1260,997 1310,992 1350,994 1420,995",
    "0,986 45,970 100,949 150,922 225,891 290,870 380,822 440,780 510,737 550,695 620,620 660,580 705,543 740,512 800,460 870,398 965,334 1050,290 1100,276 1190,242 1265,222 1330,213",
    "0,374 100,378 180,390 230,396 270,402 325,418 410,444 450,463 500,492 545,514 620,545 690,573 765,600 840,627 870,633 930,654 980,664 1020,676 1080,690 1150,707 1210,726 1260,729 1355,729 1380,721 1403,718"
  ],
  mid: [
    "153,523 168,523 180,532 195,541 240,540 262,567 290,605 310,645 325,680 345,745 370,840 390,878 425,930 445,985 470,1030 500,1095 525,1160 545,1200 562,1220 585,1223 630,1204 645,1180 670,1100 690,1070 710,1048 733,1000 760,910 790,800 820,705 833,660 848,625 860,605 875,605 890,617 905,631 920,635 945,656 960,680 980,715 1010,748 1035,783 1060,845 1095,915 1120,940 1150,975 1165,970 1195,905 1220,847 1240,820 1270,790 1285,780 1310,772 1338,771 1365,745 1380,720 1397,709 1415,722 1438,753",
    "0,661 12,670 30,700 50,755 75,815 98,850 125,866 160,892 185,900 205,915 235,940 255,973 270,979 290,970 325,933 350,900 378,850 402,818 420,814 445,770 475,703 500,620 520,575 560,480 575,458 590,459 610,473 650,482 665,495 690,540 720,585 745,650 775,785 805,900 835,1015 862,1060 878,1075 910,1078 945,1090 980,1090 1000,1055 1035,980 1052,930 1070,835 1100,745 1145,662 1165,641 1185,632 1210,590 1250,505 1285,454 1305,458 1350,474 1380,520 1395,532 1415,527 1435,538",
    "0,493 20,515 45,555 80,695 140,900 170,945 210,1022 255,1068 275,1103 295,1109 340,1085 355,1050 388,955 445,860 478,838 520,778 575,700 605,687 650,680 695,682 740,649 775,632 800,631 835,615 865,625 910,607 950,584 990,580 1020,592 1050,607 1098,597 1140,638 1165,650 1195,688 1235,725 1255,752 1325,809 1365,823 1378,838",
    "0,926 18,945 90,947 115,933 180,943 225,954 240,940 290,908 305,890 340,862 375,830 410,790 450,722 475,685 500,640 522,612 585,615 655,613 690,645 710,675 760,780 795,840 825,900 875,970 900,1025 925,1080 955,1115 998,1146 1025,1130 1045,1106 1095,1070 1145,990 1195,880 1225,785 1255,735 1290,690 1320,668 1350,661 1403,659"
  ],
  slow: [
    "152,785 165,840 185,950 205,1060 227,1168 255,1230 280,1277 315,1345 330,1352 345,1370 370,1418 385,1434 412,1433 432,1420 475,1357 490,1300 508,1205 530,1120 555,1065 575,995 595,905 620,770 640,660 660,545 675,470 690,400 705,350 720,338 735,335 750,337 775,331 793,360 808,400 820,455 835,490 850,513 865,550 880,600 905,720 935,860 965,1000 990,1100 1006,1121 1022,1097 1048,1022 1080,965 1120,885 1150,853 1175,838 1200,770 1220,712 1237,697 1250,707 1275,745 1297,757 1315,800 1330,870 1345,950 1365,1025 1382,1075 1395,1096 1408,1101 1422,1118 1438,1118",
    "0,1021 15,1021 40,996 55,1007 70,1019 85,1045 98,1053 115,1028 140,965 160,935 180,880 200,810 215,765 230,720 242,708 258,711 270,703 300,645 320,625 345,565 362,520 375,497 390,440 415,383 430,390 450,408 485,430 500,455 515,500 540,547 560,557 578,610 600,705 620,830 635,940 660,1090 690,1220 718,1307 735,1298 755,1281 795,1280 820,1248 850,1140 875,1020 900,880 930,660 960,510 990,400 1005,374 1035,364 1065,328 1078,321 1095,293 1122,268 1137,286 1165,375 1190,440 1220,595 1237,640 1255,658 1300,717 1327,770 1350,850 1370,960 1400,1080 1425,1190 1438,1218",
    "0,1240 43,1335 85,1345 98,1360 115,1403 135,1405 155,1375 180,1305 195,1240 210,1110 230,960 250,860 285,710 320,615 360,465 417,305 430,290 445,284 465,284 480,275 490,277 505,292 530,337 580,340 620,316 655,333 675,350 695,390 720,418 765,433 805,457 820,485 840,510 860,550 890,605 910,626 938,630 950,665 978,717 1008,735 1030,785 1080,860 1110,925 1140,967 1165,993 1195,1002 1240,1051 1255,1043 1285,1010 1312,990 1340,928 1378,886",
    "0,968 20,942 65,910 90,868 125,848 165,783 235,718 262,709 300,650 335,588 364,543 435,625 490,695 525,765 555,850 605,1040 665,1210 695,1246 740,1276 765,1332 795,1356 838,1351 860,1300 905,1155 935,1095 970,1005 1012,870 1045,710 1070,590 1090,530 1115,480 1140,415 1168,389 1205,392 1243,407 1270,455 1300,525 1330,605 1355,700 1375,760 1403,805"
  ]
};

const dates = ("28/10 29/10 30/10 31/10 1/11 4/11 5/11 6/11 7/11 8/11 11/11 12/11 13/11 14/11 15/11 18/11 19/11 20/11 21/11 22/11 25/11 26/11 27/11 28/11 29/11 " +
  "2/12 3/12 4/12 5/12 6/12 9/12 10/12 11/12 12/12 13/12 16/12 17/12 18/12 19/12 20/12 23/12 27/12 30/12").split(" ");

const NS = "http://www.w3.org/2000/svg";
function add(parentId, tag, attrs, text) {
  const el = document.createElementNS(NS, tag);
  for (const k in attrs) el.setAttribute(k, attrs[k]);
  if (text) el.textContent = text;
  document.getElementById(parentId).appendChild(el);
}

for (const name of ["fast", "price", "slow", "avg", "trend", "mid"]) {
  const points = series[name].flatMap((run, i) => run.split(" ").map(pair => {
    const [px, py] = pair.split(",").map(Number);
    return (blocks[i].x + px / 3).toFixed(1) + " " + (blocks[i].y + py * blocks[i].step).toFixed(1);
  }));
  add("series", "path", { class: name, d: "M" + points.join("L") });
}

for (let i = 0; i <= 11; i++) {
  const y = Math.round(135 + i * 73.45) + 0.5;
  if (i < 11) add("grid", "path", { d: `M50 ${y}H1889` });
  add("ticks", "path", { d: `M45 ${y}H52` });
  add("ylabels", "text", { x: 39, y: y + 4.5 }, String(5100 - i * 50));
}

dates.forEach((date, i) => {
  const x = Math.round(49 + i * 43.24) + 0.5;
  if (i > 0) add("grid", "path", { d: `M${x} 136V943` });
  add("ticks", "path", { d: `M${x} 940V948` });
  add("xlabels", "text", { transform: `translate(${x - 2} 953) rotate(90)` }, date + "/24");
});
```
